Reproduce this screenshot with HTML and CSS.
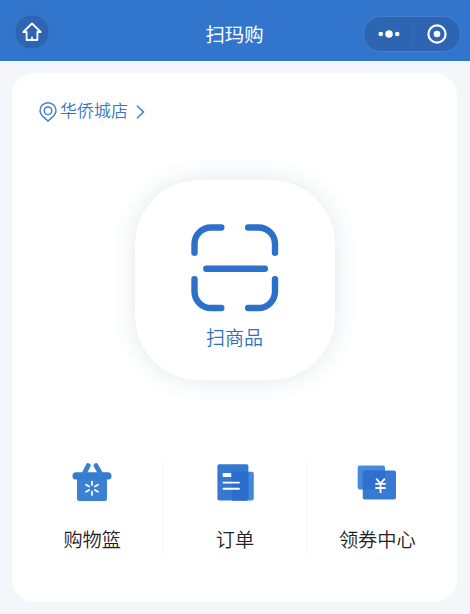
FILE: index.html
```html
<!DOCTYPE html>
<html lang="zh-CN">
<head>
    <meta charset="UTF-8">
    <meta name="viewport" content="width=device-width, initial-scale=1.0">
    <title>扫玛购</title>
    <link rel="stylesheet" href="styles.css">
</head>
<body>
    <header class="navbar">
        <a href="#" class="home">
            <svg width="20" height="20" viewBox="0 0 20 20" fill="none" stroke="#fff" stroke-width="1.8" stroke-linejoin="round">
                <path d="M10 1.5L1.3 10H4.6V18H15.4V10H18.7Z"/>
                <path d="M10 14.8V18"/>
            </svg>
        </a>
        <h1 class="title">扫玛购</h1>
        <div class="capsule">
            <svg class="dots" width="22" height="8" viewBox="0 0 22 8" fill="#fff">
                <circle cx="2.8" cy="4" r="2.3"/>
                <circle cx="11" cy="4" r="3.8"/>
                <circle cx="19.2" cy="4" r="2.3"/>
            </svg>
            <span class="line"></span>
            <svg class="close" width="20" height="20" viewBox="0 0 20 20">
                <circle cx="10" cy="10" r="8.6" fill="none" stroke="#fff" stroke-width="2.2"/>
                <circle cx="10" cy="10" r="3.3" fill="#fff"/>
            </svg>
        </div>
    </header>
    <main class="card">
        <a href="#" class="store">
            <svg width="18" height="20" viewBox="0 0 18 20" fill="none" stroke="#3a7fca" stroke-width="1.4">
                <path d="M9 19C7 17.2 1 13.3 1 8.7A8 7.9 0 0 1 17 8.7C17 13.3 11 17.2 9 19Z"/>
                <circle cx="9" cy="8.8" r="3.8"/>
            </svg>
            <span class="store-name">华侨城店</span>
            <svg width="9" height="14" viewBox="0 0 9 14" fill="none" stroke="#3a7fca" stroke-width="1.5">
                <path d="M1 0.8L7.5 7L1 13.2"/>
            </svg>
        </a>
        <a href="#" class="scan">
            <svg width="88" height="88" viewBox="0 0 88 88" fill="none" stroke="#2b70ca" stroke-width="6.4" stroke-linecap="round">
                <path d="M3.5 28.8V20A16.5 16.5 0 0 1 20 3.5H30.3"/>
                <path d="M57.2 3.5H67.5A16.5 16.5 0 0 1 84 20V28.8"/>
                <path d="M3.5 55.2V67.5A16.5 16.5 0 0 0 20 84H30.3"/>
                <path d="M57.2 84H67.5A16.5 16.5 0 0 0 84 67.5V55.2"/>
                <path d="M15.3 44.7H73.8"/>
            </svg>
            <span class="scan-text">扫商品</span>
        </a>
        <nav class="menu">
            <a href="#" class="item">
                <svg width="40" height="40" viewBox="0 0 40 40">
                    <path d="M5 13H35V36.5Q35 39 32.5 39H7.5Q5 39 5 36.5Z" fill="#3a80d3"/>
                    <rect x="0.5" y="10.3" width="39" height="7.2" rx="3.6" fill="#347cd0"/>
                    <path d="M16.2 3.6L11.7 12.5M24 3.6L29 12.5" stroke="#3b7fd0" stroke-width="4.8" stroke-linecap="round"/>
                    <path d="M20 19.5V23M20 29.5V33M14 22.7L17.2 24.5M22.8 28L26 29.8M26 22.7L22.8 24.5M17.2 28L14 29.8" stroke="#fff" stroke-width="1.7" stroke-linecap="round"/>
                </svg>
                <span>购物篮</span>
            </a>
            <a href="#" class="item">
                <svg width="40" height="40" viewBox="0 0 40 40">
                    <rect x="17" y="9.7" width="21.8" height="28.8" rx="2" fill="#4388da"/>
                    <rect x="2.4" y="2.3" width="31" height="36.2" rx="2" fill="#3478cf"/>
                    <path d="M17 9.7H33.4V36.5Q33.4 38.5 31.4 38.5H17Z" fill="#2b6dcb"/>
                    <rect x="7.7" y="11" width="8.5" height="4" rx="0.5" fill="#fff"/>
                    <path d="M8.5 20.6H24M8.5 26.8H24" stroke="#fff" stroke-width="1.9" stroke-linecap="round"/>
                </svg>
                <span>订单</span>
            </a>
            <a href="#" class="item">
                <svg width="40" height="40" viewBox="0 0 40 40">
                    <rect x="0.7" y="3.5" width="27.3" height="24" rx="2" fill="#468bd9"/>
                    <rect x="5.7" y="8.5" width="33.3" height="28.9" rx="2" fill="#367ad2"/>
                    <path d="M7.7 8.5H28V27.5H5.7V10.5Q5.7 8.5 7.7 8.5Z" fill="#2d70cd"/>
                    <path d="M19.2 16.7L23.5 21.7L27.8 16.7M23.5 21.7V31M18.3 21.8H28.7M18.3 26H28.7" fill="none" stroke="#fff" stroke-width="1.8"/>
                </svg>
                <span>领券中心</span>
            </a>
        </nav>
    </main>
</body>
</html>
```
FILE: styles.css
```css
* {
    box-sizing: border-box;
}
body {
    margin: 0;
    background-color: #f4f6fa;
    font-family: "Noto Sans CJK SC", sans-serif;
}
a {
    color: inherit;
    text-decoration: none;
}
svg {
    display: block;
    flex-shrink: 0;
}

/* Barra superior */
.navbar {
    display: grid;
    grid-template-columns: 1fr auto 1fr;
    align-items: center;
    height: 61px;
    padding: 7px 9px 0 14px;
    background-color: #3275cc;
    color: white;
}
.home {
    display: flex;
    justify-content: center;
    align-items: center;
    width: 36px;
    height: 36px;
    border: 1px solid #4079c4;
    border-radius: 50%;
    background-color: #2d65b3;
    margin-top: -5px;
}
.title {
    margin: -1px 0 0 -6px;
    font-size: 19.4px;
    font-weight: 400;
    line-height: 28px;
}
.capsule {
    display: flex;
    align-items: center;
    justify-self: end;
    width: 98px;
    height: 36px;
    border: 1px solid #4580ce;
    border-radius: 18px;
    background-color: #2d65b3;
}
.dots {
    margin-left: 14px;
}
.line {
    width: 1px;
    height: 21px;
    margin-left: 12px;
    background-color: #376db7;
}
.close {
    margin-left: 14px;
}

.card {
    display: flex;
    flex-direction: column;
    height: 529px;
    margin: 12px 13px 0 12px;
    border-radius: 22px;
    background-color: white;
}

/* Tienda seleccionada */
.store {
    display: flex;
    align-items: center;
    align-self: flex-start;
    height: 24px;
    margin: 27px 0 0 27px;
    color: #2f76c4;
}
.store-name {
    margin: -4px 8px 0 3px;
    font-size: 17px;
    font-weight: 350;
    line-height: 24px;
}

/* Botón de escanear */
.scan {
    display: flex;
    flex-direction: column;
    align-items: center;
    align-self: center;
    width: 200px;
    height: 200px;
    margin-top: 56px;
    padding-top: 44px;
    border-radius: 64px;
    background-color: white;
    box-shadow: 0 0 24px rgba(45, 85, 130, 0.14);
    color: #2d70bd;
}
.scan-text {
    margin-top: 11px;
    font-size: 19px;
    font-weight: 350;
    line-height: 28px;
}

/* Menú inferior */
.menu {
    display: grid;
    grid-template-columns: repeat(3, 1fr);
    height: 94px;
    margin: 82px 9px 0;
}
.item {
    display: flex;
    flex-direction: column;
    align-items: center;
    color: #222;
    font-size: 19.2px;
    font-weight: 350;
    line-height: 28px;
}
.item + .item {
    border-left: 1px solid #f6f7f8;
}
.item span {
    margin-top: 23px;
}
```
